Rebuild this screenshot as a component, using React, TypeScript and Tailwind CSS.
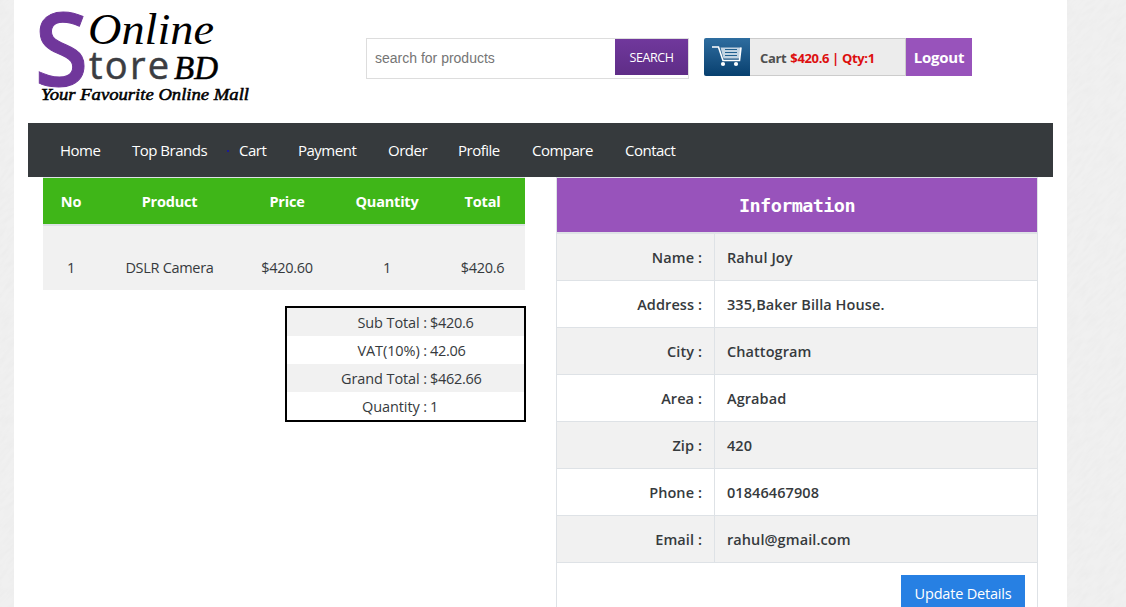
import type { ReactNode } from "react";

const navItems = [
  { label: "Home", width: "w-[72px]" },
  { label: "Top Brands", width: "w-[107px]" },
  { label: "Cart", width: "w-[59px]" },
  { label: "Payment", width: "w-[90px]" },
  { label: "Order", width: "w-[70px]" },
  { label: "Profile", width: "w-[74px]" },
  { label: "Compare", width: "w-[93px]" },
  { label: "Contact", width: "w-[80px]" },
];

const totals = [
  ["Sub Total :", "$420.6"],
  ["VAT(10%) :", "42.06"],
  ["Grand Total :", "$462.66"],
  ["Quantity :", "1"],
];

const details = [
  ["Name :", "Rahul Joy"],
  ["Address :", "335,Baker Billa House."],
  ["City :", "Chattogram"],
  ["Area :", "Agrabad"],
  ["Zip :", "420"],
  ["Phone :", "01846467908"],
  ["Email :", "rahul@gmail.com"],
];

function Texture({ id }: { id: string }) {
  return (
    <svg className="block h-full w-full" aria-hidden="true">
      <filter id={id} x="0" y="0" width="100%" height="100%">
        <feTurbulence type="fractalNoise" baseFrequency="0.07 0.3" numOctaves="3" seed="4" />
        <feColorMatrix values="0 0 0 0 0.5  0 0 0 0 0.5  0 0 0 0 0.5  0.14 0 0 0 -0.05" />
      </filter>
      <g transform="rotate(-45)">
        <rect x="-700" y="-100" width="1400" height="900" filter={`url(#${id})`} />
      </g>
    </svg>
  );
}

function Logo() {
  return (
    <svg width="240" height="112" viewBox="28 0 240 112" className="block">
      <text transform="translate(34.5 86) scale(0.96 1)" fontFamily="Open Sans" fontWeight="600" fontSize="102" fill="#70379b" stroke="#70379b" strokeWidth="1">
        S
      </text>
      <text x="88" y="44" fontFamily="Liberation Serif" fontStyle="italic" fontSize="44" textLength="126" lengthAdjust="spacingAndGlyphs" fill="#000">
        Online
      </text>
      <text x="89" y="79" fontFamily="Open Sans" fontSize="38" textLength="80" fill="#3b3d42" stroke="#3b3d42" strokeWidth="0.5">
        tore
      </text>
      <text x="174" y="79" fontFamily="Liberation Serif" fontStyle="italic" fontSize="33" textLength="44" lengthAdjust="spacingAndGlyphs" fill="#000" stroke="#000" strokeWidth="0.5">
        BD
      </text>
      <text x="41" y="100" fontFamily="Liberation Serif" fontStyle="italic" fontSize="16" textLength="208" lengthAdjust="spacingAndGlyphs" fill="#000" stroke="#000" strokeWidth="0.5">
        Your Favourite Online Mall
      </text>
    </svg>
  );
}

function CartIcon() {
  return (
    <svg width="46" height="38" viewBox="0 0 46 38" className="block">
      <path d="M16.5 9.500H37L35.500 20.500H19.500Z" fill="#c3d4e2" />
      <path d="M21 11.500H33M21 14.500H33M21 17.500H33" stroke="#21608f" strokeWidth="1" />
      <path d="M8 9H14.500L19 22.500H35.500L37 9.500" fill="none" stroke="#fff" strokeWidth="1.6" />
      <circle cx="19" cy="26" r="2.1" fill="#fff" />
      <circle cx="32" cy="26" r="2.1" fill="#fff" />
    </svg>
  );
}

function Head({ children }: { children: ReactNode }) {
  return <th className="p-0 pt-[2px] text-center text-[14.5px] font-bold tracking-[-0.2px] text-white">{children}</th>;
}

export default function App() {
  return (
    <div className="flex h-[607px] w-[1126px] overflow-hidden bg-[#f0f0f0] font-['Open_Sans',sans-serif] text-[14.5px] tracking-[-0.22px] text-[#363a3d]">
      <aside className="w-[14px] shrink-0">
        <Texture id="grain-left" />
      </aside>
      <div className="w-[1053px] shrink-0 bg-white px-[14px]">
        <header className="flex h-[123px] items-start tracking-normal">
          <Logo />
          <form className="mt-[38px] ml-[98px] flex h-[41px] w-[323px] items-start border border-[#dddddd]">
            <span className="flex h-[39px] w-[248px] items-center pl-[8px] font-['Liberation_Sans',sans-serif] text-[14px] text-[#757575]">
              search for products
            </span>
            <button type="button" className="h-[36px] w-[73px] bg-linear-to-b from-[#70389c] to-[#5f2d87] pt-[2px] text-[12.5px] tracking-[-0.4px] text-white">
              SEARCH
            </button>
          </form>
          <div className="mt-[38px] ml-[15px] flex h-[38px]">
            <div className="w-[46px] overflow-hidden rounded-l-[2px] bg-linear-to-b from-[#2e6d9f] to-[#07406f]">
              <CartIcon />
            </div>
            <div className="flex w-[156px] items-center border border-l-0 border-[#cccccc] bg-[#ececec] pt-[3px] pl-[10px] text-[13px] font-bold tracking-[-0.35px] text-[#505050]">
              <span>Cart</span>
              <span className="ml-[4px] text-[#dd0f0f]">$420.6 | Qty:1</span>
            </div>
            <button type="button" className="w-[66px] bg-[#9853bb] pt-px text-[15px] font-bold tracking-[-0.2px] text-white">
              Logout
            </button>
          </div>
        </header>

        <nav className="relative flex h-[54px] items-center bg-[#363a3d] pl-[32px] text-[15px] tracking-[-0.5px] text-white">
          {navItems.map((item) => (
            <a key={item.label} className={`${item.width} pt-px whitespace-nowrap`}>
              {item.label}
            </a>
          ))}
          <span className="absolute top-[27px] left-[199px] h-[2px] w-[2px] bg-[#1c1b96]" />
        </nav>

        <main className="flex pl-[15px]">
          <section className="w-[483px]">
            <table className="w-[482px] table-fixed border-collapse text-center">
              <colgroup>
                <col className="w-[56px]" />
                <col className="w-[141px]" />
                <col className="w-[94px]" />
                <col className="w-[106px]" />
                <col className="w-[85px]" />
              </colgroup>
              <thead>
                <tr className="h-[47px] bg-[#3fb618] shadow-[inset_0_1px_0_#dee2e6]">
                  <Head>No</Head>
                  <Head>Product</Head>
                  <Head>Price</Head>
                  <Head>Quantity</Head>
                  <Head>Total</Head>
                </tr>
              </thead>
              <tbody>
                <tr className="h-[66px] bg-[#f1f1f1] tracking-[-0.3px] shadow-[inset_0_2px_0_#dee2e6]">
                  <td className="pt-[22px]">1</td>
                  <td className="pt-[22px]">DSLR Camera</td>
                  <td className="pt-[22px]">$420.60</td>
                  <td className="pt-[22px]">1</td>
                  <td className="pt-[22px]">$420.6</td>
                </tr>
              </tbody>
            </table>
            <div className="mt-[16px] ml-auto w-[241px] border-2 border-black">
              {totals.map(([label, value]) => (
                <div key={label} className="flex h-[28px] items-center pt-[2px] odd:bg-[#f1f1f1]">
                  <span className="w-[140px] text-right tracking-[-0.1px]">{label}</span>
                  <span className="ml-[3px] tracking-[-0.3px]">{value}</span>
                </div>
              ))}
            </div>
          </section>

          <section className="ml-[30px] h-[480px] w-[482px] border border-[#dee2e6]">
            <h2 className="flex h-[56px] items-center justify-center border-b-2 border-[#dee2e6] bg-[#9853bb] pt-[2px] font-['DejaVu_Sans_Mono',monospace] text-[18.5px] font-bold tracking-[-0.6px] text-white">
              Information
            </h2>
            {details.map(([label, value]) => (
              <div key={label} className="flex h-[47px] border-b border-[#dee2e6] text-[14.5px] font-semibold tracking-[0.08px] even:bg-[#f1f1f1]">
                <div className="flex w-[158px] items-center justify-end border-r border-[#dee2e6] pt-[2px] pr-[12px]">{label}</div>
                <div className="flex items-center pt-[2px] pl-[12px]">{value}</div>
              </div>
            ))}
            <div className="flex justify-end pt-[12px] pr-[12px]">
              <button type="button" className="h-[38px] w-[124px] bg-[#2780e3] pb-px text-[14.5px] tracking-[-0.2px] text-white">
                Update Details
              </button>
            </div>
          </section>
        </main>
      </div>
      <aside className="w-[59px] shrink-0">
        <Texture id="grain-right" />
      </aside>
    </div>
  );
}
